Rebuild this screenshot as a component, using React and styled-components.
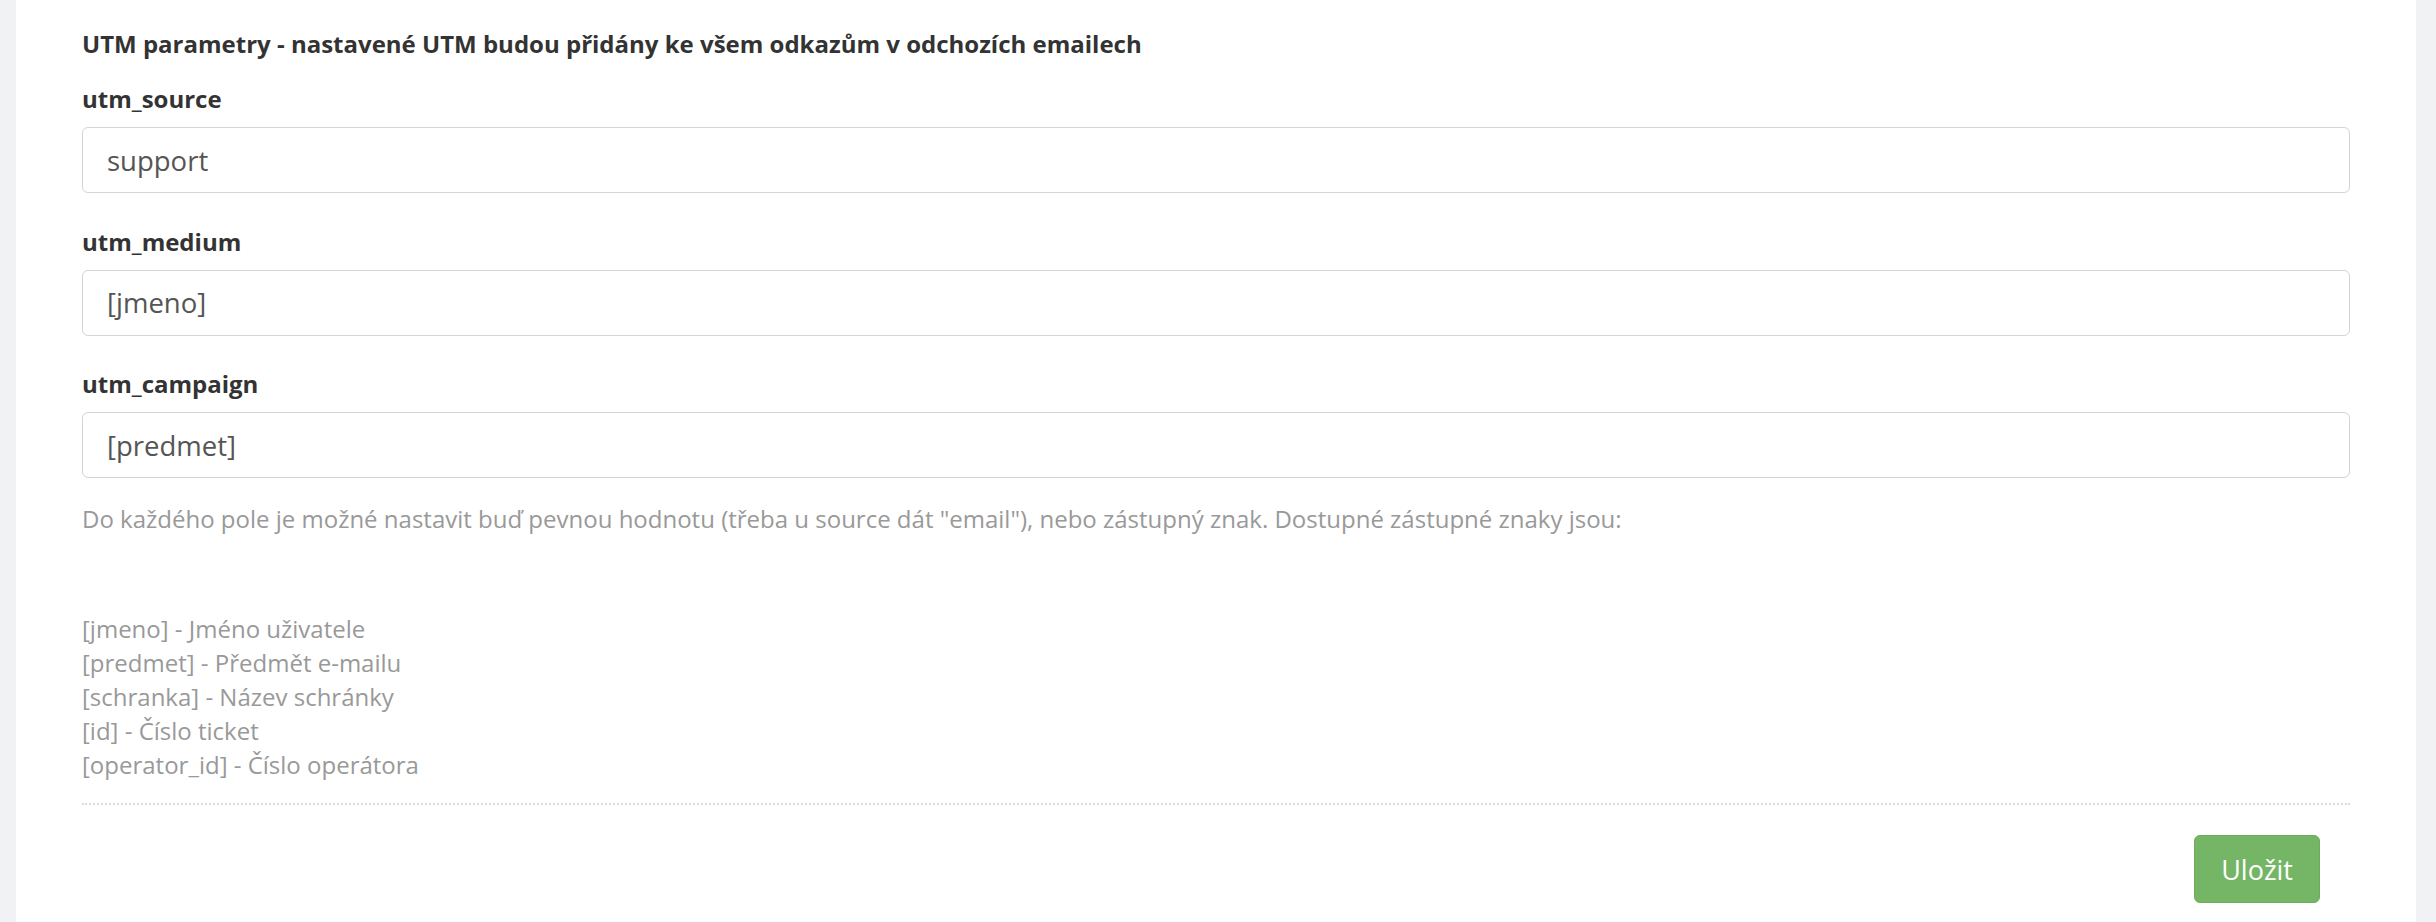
import React from "react";
import styled, { createGlobalStyle } from "styled-components";

const GlobalStyle = createGlobalStyle`
  body {
    margin: 0;
    background: #f1f2f4;
    font-family: "Open Sans", "Liberation Sans", sans-serif;
  }
`;

const Page = styled.div`
  padding: 0 20px 0 16px;
  min-height: 922px;
  box-sizing: border-box;
`;

const Panel = styled.div`
  background: #fff;
  min-height: 922px;
  box-sizing: border-box;
  padding: 27px 66px 19px;
`;

const Heading = styled.h4`
  margin: 0 0 21px;
  font-size: 24px;
  line-height: 34px;
  font-weight: 700;
  color: #333;
`;

const FieldList = styled.div`
  display: flex;
  flex-direction: column;
  gap: 31.5px;
`;

const FormGroup = styled.div`
  display: flex;
  flex-direction: column;
`;

const Label = styled.label`
  margin-bottom: 11px;
  font-size: 24px;
  line-height: 34px;
  font-weight: 700;
  color: #333;
`;

const Input = styled.input`
  height: 66px;
  box-sizing: border-box;
  padding: 0 24px;
  border: 1.5px solid #d4d4d4;
  border-radius: 6px;
  background: #fff;
  font-family: inherit;
  font-size: 27.5px;
  color: #555;
  outline: none;
`;

const HelpText = styled.p`
  margin: ${(p) => p.gap || 0}px 0 0;
  font-size: 24px;
  line-height: 34px;
  color: #999;
`;

const PlaceholderList = styled.ul`
  list-style: none;
  margin: 76px 0 0;
  padding: 0;
  font-size: 24px;
  line-height: 34px;
  color: #999;
`;

const Divider = styled.hr`
  margin: 21px 0 0;
  border: 0;
  border-top: 2px dotted #dcdcdc;
`;

const Footer = styled.div`
  display: flex;
  justify-content: flex-end;
  padding: 30px 30px 0 0;
`;

const SaveButton = styled.button`
  height: 68px;
  padding: 0 26px;
  border: 1.5px solid #6aae5c;
  border-radius: 6px;
  background: #74b566;
  color: #fff;
  font-family: inherit;
  font-size: 27px;
  cursor: pointer;
`;

const fields = [
  { name: "utm_source", value: "support" },
  { name: "utm_medium", value: "[jmeno]" },
  { name: "utm_campaign", value: "[predmet]" },
];

const placeholders = [
  "[jmeno] - Jméno uživatele",
  "[predmet] - Předmět e-mailu",
  "[schranka] - Název schránky",
  "[id] - Číslo ticket",
  "[operator_id] - Číslo operátora",
];

const App = () => {
  return (
    <>
      <GlobalStyle />
      <Page>
        <Panel>
          <Heading>
            UTM parametry - nastavené UTM budou přidány ke všem odkazům v
            odchozích emailech
          </Heading>
          <FieldList>
            {fields.map((f) => (
              <FormGroup key={f.name}>
                <Label htmlFor={f.name}>{f.name}</Label>
                <Input id={f.name} defaultValue={f.value} />
              </FormGroup>
            ))}
          </FieldList>
          <HelpText gap={24}>
            Do každého pole je možné nastavit buď pevnou hodnotu (třeba u
            source dát "email"), nebo zástupný znak. Dostupné zástupné znaky
            jsou:
          </HelpText>
          <PlaceholderList>
            {placeholders.map((p) => (
              <li key={p}>{p}</li>
            ))}
          </PlaceholderList>
          <Divider />
          <Footer>
            <SaveButton>Uložit</SaveButton>
          </Footer>
        </Panel>
      </Page>
    </>
  );
};

export default App;
